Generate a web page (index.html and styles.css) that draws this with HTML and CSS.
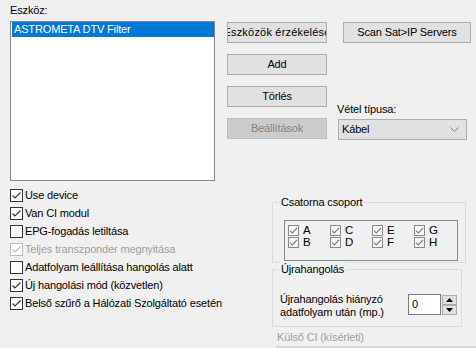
FILE: index.html
```html
<!DOCTYPE html>
<html>
<head>
<meta charset="utf-8">
<link rel="stylesheet" href="styles.css">
</head>
<body>
<div class="dlg">
  <div class="top">
    <div class="devcol">
      <div class="lbl">Eszköz:</div>
      <div class="listbox"><div class="item sel">ASTROMETA DTV Filter</div></div>
    </div>
    <div class="btncol">
      <div class="btn wide"><span>Eszközök érzékelése</span></div>
      <div class="btn">Add</div>
      <div class="btn">Törlés</div>
      <div class="btn disabled">Beállítások</div>
    </div>
    <div class="rightcol">
      <div class="btn scan">Scan Sat&gt;IP Servers</div>
      <div class="lbl2">Vétel típusa:</div>
      <div class="combo"><span>Kábel</span>
        <svg class="chev" width="9" height="6" viewBox="0 0 9 6"><polyline points="0.5,0.5 4.5,4.5 8.5,0.5" fill="none" stroke="#808080" stroke-width="1"/></svg>
      </div>
    </div>
  </div>
  <div class="bottom">
    <div class="checks">
      <div class="chk"><span class="box on"></span><span>Use device</span></div>
      <div class="chk"><span class="box on"></span><span>Van CI modul</span></div>
      <div class="chk"><span class="box"></span><span>EPG-fogadás letiltása</span></div>
      <div class="chk dis"><span class="box on"></span><span>Teljes transzponder megnyitása</span></div>
      <div class="chk"><span class="box"></span><span>Adatfolyam leállítása hangolás alatt</span></div>
      <div class="chk"><span class="box on"></span><span>Új hangolási mód (közvetlen)</span></div>
      <div class="chk"><span class="box on"></span><span>Belső szűrő a Hálózati Szolgáltató esetén</span></div>
    </div>
    <div class="groups">
      <div class="group g1">
        <div class="gtitle">Csatorna csoport</div>
        <div class="panel">
          <div class="sc"><span class="sbox"></span>A</div>
          <div class="sc"><span class="sbox"></span>C</div>
          <div class="sc"><span class="sbox"></span>E</div>
          <div class="sc"><span class="sbox"></span>G</div>
          <div class="sc"><span class="sbox"></span>B</div>
          <div class="sc"><span class="sbox"></span>D</div>
          <div class="sc"><span class="sbox"></span>F</div>
          <div class="sc"><span class="sbox"></span>H</div>
        </div>
      </div>
      <div class="group g2">
        <div class="gtitle">Újrahangolás</div>
        <div class="rrow">
          <div class="rtext">Újrahangolás hiányzó<br>adatfolyam után (mp.)</div>
          <div class="spinin">0</div>
          <div class="spinbtns">
            <div class="sb"><svg width="7" height="4" viewBox="0 0 7 4"><polygon points="3.5,0 7,4 0,4" fill="#000"/></svg></div>
            <div class="sb"><svg width="7" height="4" viewBox="0 0 7 4"><polygon points="0,0 7,0 3.5,4" fill="#000"/></svg></div>
          </div>
        </div>
      </div>
      <div class="ext">Külső CI (kísérleti)</div>
      <div class="extbar"></div>
    </div>
  </div>
</div>
</body>
</html>
```

FILE: styles.css
```css
html, body {
  margin: 0;
  padding: 0;
  background: #f0f0f0;
}
body {
  width: 476px;
  height: 348px;
  overflow: hidden;
  font-family: "Liberation Sans", Arial, sans-serif;
  font-size: 11px;
  letter-spacing: -0.15px;
  color: #000;
}
.dlg {
  width: 476px;
  height: 348px;
}
.top {
  display: flex;
  height: 181px;
}
.devcol {
  margin-left: 10px;
  width: 205px;
}
.lbl {
  box-sizing: border-box;
  height: 21px;
  padding-top: 3px;
  line-height: 15px;
}
.listbox {
  box-sizing: border-box;
  width: 205px;
  height: 160px;
  background: #fff;
  border: 1px solid #828790;
  padding-left: 1px;
}
.item {
  height: 15px;
  line-height: 15px;
  padding-left: 2px;
}
.item.sel {
  background: #0078d7;
  color: #fff;
}
.btncol {
  margin-left: 12px;
  padding-top: 22px;
  display: flex;
  flex-direction: column;
  gap: 11px;
}
.btn {
  box-sizing: border-box;
  width: 100px;
  height: 21px;
  background: #e1e1e1;
  border: 1px solid #adadad;
  display: flex;
  align-items: center;
  justify-content: center;
  overflow: hidden;
  white-space: nowrap;
  line-height: 15px;
}
.btn span {
  flex: none;
}
.btn.wide span {
  letter-spacing: 0.2px;
}
.btn.disabled {
  background: #cccccc;
  border-color: #bfbfbf;
  color: #838383;
}
.rightcol {
  margin-left: 11px;
  padding-top: 22px;
  display: flex;
  flex-direction: column;
}
.btn.scan {
  width: 128px;
  margin-left: 5px;
}
.lbl2 {
  margin-top: 59px;
  margin-left: -1px;
  height: 17px;
  line-height: 15px;
}
.combo {
  box-sizing: border-box;
  width: 129px;
  height: 21px;
  background: #e1e1e1;
  border: 1px solid #adadad;
  display: flex;
  align-items: center;
  justify-content: space-between;
  padding: 0 7px 0 3px;
  line-height: 15px;
}
.chev {
  display: block;
}
.bottom {
  display: flex;
}
.checks {
  margin-left: 10px;
  width: 264px;
  padding-top: 5px;
}
.chk {
  display: flex;
  align-items: flex-start;
  height: 18px;
  line-height: 18px;
  gap: 2px;
  white-space: nowrap;
}
.box {
  box-sizing: border-box;
  flex: none;
  width: 13px;
  height: 13px;
  margin-top: 3px;
  border: 1px solid #333;
  background: #fff;
}
.box.on {
  background: #fff url("data:image/svg+xml;utf8,<svg xmlns='http://www.w3.org/2000/svg' width='11' height='11' viewBox='0 0 11 11'><polyline points='1.5,5.5 4,8 9.5,2.5' fill='none' stroke='%23333' stroke-width='1.1'/></svg>") no-repeat center;
}
.chk.dis {
  color: #a0a0a0;
}
.chk.dis .box {
  border-color: #bcbcbc;
  background: #fff url("data:image/svg+xml;utf8,<svg xmlns='http://www.w3.org/2000/svg' width='11' height='11' viewBox='0 0 11 11'><polyline points='1.5,5.5 4,8 9.5,2.5' fill='none' stroke='%23bcbcbc' stroke-width='1.1'/></svg>") no-repeat center;
}
.groups {
  display: flex;
  flex-direction: column;
  align-items: flex-start;
}
.group {
  box-sizing: border-box;
  border: 1px solid #dcdcdc;
}
.g1 {
  margin-top: 21px;
  width: 194px;
  height: 61px;
  padding-left: 11px;
}
.gtitle {
  display: inline-block;
  margin-top: -8px;
  margin-left: -4px;
  padding: 0 1px;
  background: #f0f0f0;
  line-height: 15px;
  height: 15px;
  vertical-align: top;
}
.panel {
  box-sizing: border-box;
  margin-top: 5px;
  width: 174px;
  height: 41px;
  border: 1px solid #828790;
  padding: 3px 0 0 3px;
  display: grid;
  grid-template-columns: repeat(4, 42px);
  grid-auto-rows: 12px;
}
.sc {
  display: flex;
  align-items: center;
  gap: 4px;
  line-height: 12px;
  font-size: 11.5px;
}
.sbox {
  box-sizing: border-box;
  flex: none;
  width: 11px;
  height: 11px;
  border: 1px solid #8a8a8a;
  background: #f6f6f6 url("data:image/svg+xml;utf8,<svg xmlns='http://www.w3.org/2000/svg' width='9' height='9' viewBox='0 0 9 9'><polyline points='1,4.5 3.3,7 8,1.8' fill='none' stroke='%23707070' stroke-width='1.1'/></svg>") no-repeat center;
}
.g2 {
  margin-top: 6px;
  width: 190px;
  height: 58px;
  padding-left: 7px;
}
.g2 .gtitle {
  margin-left: 0;
}
.rrow {
  display: flex;
  align-items: flex-start;
  margin-top: 11px;
}
.rtext {
  width: 128px;
  line-height: 13px;
  white-space: nowrap;
}
.spinin {
  box-sizing: border-box;
  width: 33px;
  height: 21px;
  margin-top: 1px;
  background: #fff;
  border: 1px solid #7a7a7a;
  padding-left: 3px;
  line-height: 19px;
}
.spinbtns {
  display: flex;
  flex-direction: column;
  margin-left: 1px;
  margin-top: 2px;
}
.sb {
  box-sizing: border-box;
  width: 15px;
  height: 10px;
  background: #e1e1e1;
  border: 1px solid #adadad;
  display: flex;
  align-items: center;
  justify-content: center;
}
.sb svg {
  display: block;
}
.ext {
  margin-top: 3px;
  margin-left: 5px;
  line-height: 15px;
  color: #a0a0a0;
}
.extbar {
  margin-top: 1px;
  margin-left: 4px;
  width: 200px;
  height: 2px;
  background: #d8d8d8;
}
```
